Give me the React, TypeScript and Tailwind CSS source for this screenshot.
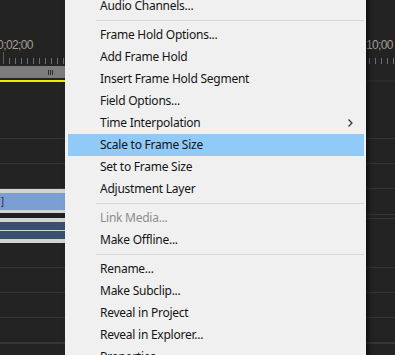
import React from 'react';

type MenuEntry = { label?: string; sep?: boolean; disabled?: boolean; active?: boolean; submenu?: boolean };

const menuItems: MenuEntry[] = [
  { label: 'Audio Channels...' },
  { sep: true },
  { label: 'Frame Hold Options...' },
  { label: 'Add Frame Hold' },
  { label: 'Insert Frame Hold Segment' },
  { label: 'Field Options...' },
  { label: 'Time Interpolation', submenu: true },
  { label: 'Scale to Frame Size', active: true },
  { label: 'Set to Frame Size' },
  { label: 'Adjustment Layer' },
  { sep: true },
  { label: 'Link Media...', disabled: true },
  { label: 'Make Offline...' },
  { sep: true },
  { label: 'Rename...' },
  { label: 'Make Subclip...' },
  { label: 'Reveal in Project' },
  { label: 'Reveal in Explorer...' },
  { label: 'Properties...' },
];

function Ruler() {
  const ticks = [];
  for (let x = 3; x < 395; x += 6) {
    const major = (x - 3) % 360 === 0;
    ticks.push(<rect key={x} x={x} y={major ? 0 : 6} width={1} height={major ? 12 : 6} fill={major ? '#5e5e5e' : '#6e6e6e'} />);
  }
  return (
    <svg width={395} height={13} className="block">
      {ticks}
    </svg>
  );
}

function Track({ last }: { last?: boolean }) {
  return <div className={`h-[25px] border-b border-[#363636] ${last ? 'border-b-0' : ''}`} />;
}

function Timeline() {
  return (
    <div className="flex h-[355px] w-[395px] flex-col bg-[#232323]">
      <div className="relative h-[52px] text-[12px] leading-none text-[#a39d94]" style={{ fontFamily: '"Liberation Sans", Arial, sans-serif' }}>
        <span className="absolute left-[-9px] top-[39px] tracking-[-0.6px]">00;02;00</span>
        <span className="absolute left-[351px] top-[39px] tracking-[-0.6px]">00;10;00</span>
      </div>
      <Ruler />
      <div className="mt-px flex h-[12px]">
        <div className="flex w-[300px] items-center bg-[#7c7c7c] pl-[48px]">
          <div className="flex h-[5px] gap-[1px]">
            <div className="w-px bg-[#2b2b2b]" />
            <div className="w-px bg-[#2b2b2b]" />
            <div className="w-px bg-[#2b2b2b]" />
          </div>
        </div>
      </div>
      <div className="h-[2px]" />
      <div className="flex h-[2px]">
        <div className="w-[300px] bg-[#ecec00]" />
        <div className="flex-1 bg-[#2a2a2a]" />
      </div>
      <div className="h-[57px] border-b border-[#363636]" />
      <Track />
      <Track />
      <div className="flex h-[54px]">
        <div className="flex w-[300px] flex-col bg-[#d3d3d3]">
          <div className="h-[4px]" />
          <div className="flex h-[17px] items-center bg-[#7b9fd4] pl-[1px] text-[11px] text-[#3a2a4a]" style={{ fontFamily: '"Liberation Sans", Arial, sans-serif' }}>]</div>
          <div className="h-[3px]" />
          <div className="h-[5px] bg-[#1f1f1f]" />
          <div className="h-[4px]" />
          <div className="h-[8px] bg-[#3b506d]" />
          <div className="h-[1px]" />
          <div className="h-[8px] bg-[#3b506d]" />
        </div>
        <div className="flex flex-1 flex-col">
          <div className="h-[26px] border-b border-[#363636]" />
          <div className="h-[4px] border-b border-[#363636]" />
        </div>
      </div>
      <Track />
      <Track />
      <Track />
      <Track />
      <div className="h-[10px] border-t border-[#363636]" />
    </div>
  );
}

function ContextMenu() {
  return (
    <div
      className="absolute left-[65px] top-[-5px] w-[301px] bg-[#f0f0f0] pl-[3px] pr-[2px] text-[12px] tracking-[-0.25px] shadow-[3px_2px_4px_rgba(0,0,0,0.55)]"
      style={{ fontFamily: '"Noto Sans", "Noto Sans CJK KR", sans-serif' }}
    >
      {menuItems.map((item, i) =>
        item.sep ? (
          <div key={i} className="flex h-[7px] items-center pl-[28px]">
            <div className="h-px w-full bg-[#d7d7d7]" />
          </div>
        ) : (
          <div
            key={i}
            className={`flex h-[22px] items-center justify-between pl-[32px] pr-[11px] ${item.active ? 'bg-[#91c9f7]' : ''} ${
              item.disabled ? 'text-[#8d8d8d]' : 'text-[#141414]'
            }`}
          >
            <span>{item.label}</span>
            {item.submenu && (
              <svg width={5} height={8} viewBox="0 0 5 8">
                <path d="M0.5 0.5 L4 4 L0.5 7.5" stroke="#333" strokeWidth={1.2} fill="none" />
              </svg>
            )}
          </div>
        )
      )}
    </div>
  );
}

export default function App() {
  return (
    <div className="relative h-[355px] w-[395px] overflow-hidden">
      <Timeline />
      <ContextMenu />
    </div>
  );
}
